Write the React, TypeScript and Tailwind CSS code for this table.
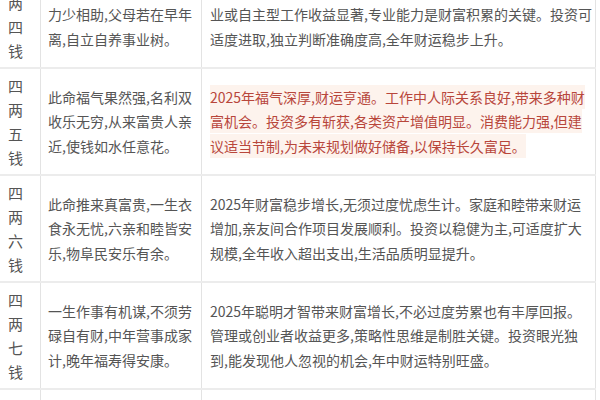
import React from "react";

type Row = {
  name: string[];
  verse: string[];
  fortune: string[];
  highlight?: boolean;
};

const rows: Row[] = [
  {
    name: ["四", "两", "四", "钱"],
    verse: ["此命劳碌早奔波,兄弟", "力少相助,父母若在早年", "离,自立自养事业树。"],
    fortune: [
      "2025年财运稳中有进,适合从事技术型、专门型或创新型职",
      "业或自主型工作收益显著,专业能力是财富积累的关键。投资可",
      "适度进取,独立判断准确度高,全年财运稳步上升。",
    ],
  },
  {
    name: ["四", "两", "五", "钱"],
    verse: ["此命福气果然强,名利双", "收乐无穷,从来富贵人亲", "近,使钱如水任意花。"],
    fortune: [
      "2025年福气深厚,财运亨通。工作中人际关系良好,带来多种财",
      "富机会。投资多有斩获,各类资产增值明显。消费能力强,但建",
      "议适当节制,为未来规划做好储备,以保持长久富足。",
    ],
    highlight: true,
  },
  {
    name: ["四", "两", "六", "钱"],
    verse: ["此命推来真富贵,一生衣", "食永无忧,六亲和睦皆安", "乐,物阜民安乐有余。"],
    fortune: [
      "2025年财富稳步增长,无须过度忧虑生计。家庭和睦带来财运",
      "增加,亲友间合作项目发展顺利。投资以稳健为主,可适度扩大",
      "规模,全年收入超出支出,生活品质明显提升。",
    ],
  },
  {
    name: ["四", "两", "七", "钱"],
    verse: ["一生作事有机谋,不须劳", "碌自有财,中年营事成家", "计,晚年福寿得安康。"],
    fortune: [
      "2025年聪明才智带来财富增长,不必过度劳累也有丰厚回报。",
      "管理或创业者收益更多,策略性思维是制胜关键。投资眼光独",
      "到,能发现他人忽视的机会,年中财运特别旺盛。",
    ],
  },
  {
    name: ["四", "两", "八", "钱"],
    verse: ["此命推来福禄宏,不须", "愁虑苦劳心,一生天定", "衣与禄,早年晚岁总无忧。"],
    fortune: [
      "2025年天赐福禄,财运顺遂。无需过分操劳即可获得稳定收入,",
      "贵人相助机会增多。投资理财宜顺势而为,全年财富积累可观,",
      "晚年生活更加安稳无忧。",
    ],
  },
];

export default function App() {
  return (
    <div
      className="w-[600px] h-[400px] overflow-hidden bg-white"
      style={{ fontFamily: '"Noto Sans CJK SC", "Noto Sans", sans-serif' }}
    >
      <div className="mt-[-38px] w-[596px]">
        {rows.map((r, i) => (
          <div key={i} className="flex border-b-2 border-[#ececec]">
            <div className="w-[41px] shrink-0 border-r border-[#e3e3e3] pl-[8px] py-[4.5px] text-[15px] leading-[24px] text-[#555555]">
              {r.name.map((c, j) => (
                <div key={j}>{c}</div>
              ))}
            </div>
            <div className="w-[161px] shrink-0 border-r border-[#e3e3e3] pl-[7px] flex flex-col justify-center text-[14px] leading-[24.5px] text-[#555555]">
              {r.verse.map((l, j) => (
                <div key={j} className="whitespace-nowrap">
                  {l}
                </div>
              ))}
            </div>
            <div className="w-[394px] shrink-0 border-r border-[#e3e3e3] pl-[8px] flex flex-col justify-center text-[14px] leading-[24.5px] text-[#555555]">
              {r.fortune.map((l, j) => (
                <div key={j} className="whitespace-nowrap">
                  {r.highlight ? (
                    <span className="bg-[#fdf3ed] text-[#b8463b] py-[2px]">{l}</span>
                  ) : (
                    l
                  )}
                </div>
              ))}
            </div>
          </div>
        ))}
      </div>
    </div>
  );
}
